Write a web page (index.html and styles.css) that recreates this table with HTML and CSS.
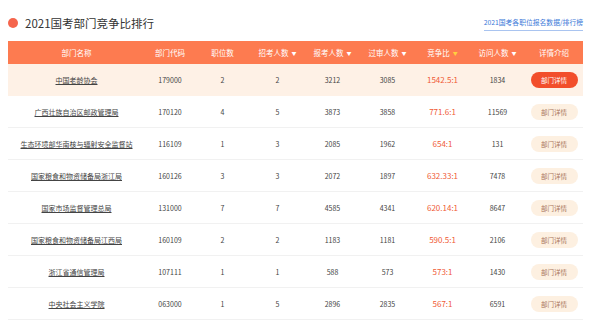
FILE: index.html
```html
<!DOCTYPE html>
<html lang="zh-CN">
<head>
<meta charset="utf-8">
<title>2021国考部门竞争比排行</title>
<link rel="stylesheet" href="styles.css">
</head>
<body>
<div class="page">
  <div class="topbar">
    <div class="title"><span class="dot"></span><span class="title-text">2021国考部门竞争比排行</span></div>
    <a class="toplink" href="#">2021国考各职位报名数据/排行榜</a>
  </div>
  <table class="rank">
    <colgroup>
      <col class="c-name"><col class="c-code"><col class="c-n"><col class="c-n"><col class="c-n"><col class="c-n"><col class="c-n"><col class="c-n"><col class="c-btn">
    </colgroup>
    <thead>
      <tr>
        <th>部门名称</th>
        <th>部门代码</th>
        <th>职位数</th>
        <th>招考人数<span class="arr">▼</span></th>
        <th>报考人数<span class="arr">▼</span></th>
        <th>过审人数<span class="arr">▼</span></th>
        <th>竞争比<span class="arr active">▼</span></th>
        <th>访问人数<span class="arr">▼</span></th>
        <th>详情介绍</th>
      </tr>
    </thead>
    <tbody>
      <tr class="hl">
        <td><a href="#">中国老龄协会</a></td><td>179000</td><td>2</td><td>2</td><td>3212</td><td>3085</td><td class="ratio">1542.5:1</td><td>1834</td><td><span class="btn on">部门详情</span></td>
      </tr>
      <tr>
        <td><a href="#">广西壮族自治区邮政管理局</a></td><td>170120</td><td>4</td><td>5</td><td>3873</td><td>3858</td><td class="ratio">771.6:1</td><td>11569</td><td><span class="btn">部门详情</span></td>
      </tr>
      <tr>
        <td><a href="#">生态环境部华南核与辐射安全监督站</a></td><td>116109</td><td>1</td><td>3</td><td>2085</td><td>1962</td><td class="ratio">654:1</td><td>131</td><td><span class="btn">部门详情</span></td>
      </tr>
      <tr>
        <td><a href="#">国家粮食和物资储备局浙江局</a></td><td>160126</td><td>3</td><td>3</td><td>2072</td><td>1897</td><td class="ratio">632.33:1</td><td>7478</td><td><span class="btn">部门详情</span></td>
      </tr>
      <tr>
        <td><a href="#">国家市场监督管理总局</a></td><td>131000</td><td>7</td><td>7</td><td>4585</td><td>4341</td><td class="ratio">620.14:1</td><td>8647</td><td><span class="btn">部门详情</span></td>
      </tr>
      <tr>
        <td><a href="#">国家粮食和物资储备局江西局</a></td><td>160109</td><td>2</td><td>2</td><td>1183</td><td>1181</td><td class="ratio">590.5:1</td><td>2106</td><td><span class="btn">部门详情</span></td>
      </tr>
      <tr>
        <td><a href="#">浙江省通信管理局</a></td><td>107111</td><td>1</td><td>1</td><td>588</td><td>573</td><td class="ratio">573:1</td><td>1430</td><td><span class="btn">部门详情</span></td>
      </tr>
      <tr>
        <td><a href="#">中央社会主义学院</a></td><td>063000</td><td>1</td><td>5</td><td>2896</td><td>2835</td><td class="ratio">567:1</td><td>6591</td><td><span class="btn">部门详情</span></td>
      </tr>
    </tbody>
  </table>
</div>
</body>
</html>
```

FILE: styles.css
```css
html, body {
  margin: 0;
  padding: 0;
  background: #fff;
}
body {
  font-family: "Noto Sans CJK SC", "Noto Sans", sans-serif;
  color: #333;
}
.page {
  padding: 0 7px 0 8px;
}
.topbar {
  height: 41px;
  display: flex;
  align-items: center;
  justify-content: space-between;
  padding-top: 4px;
  box-sizing: border-box;
}
.title {
  display: flex;
  align-items: center;
}
.dot {
  width: 10px;
  height: 10px;
  border-radius: 50%;
  background: #f5654c;
  margin-right: 7px;
}
.title-text {
  font-size: 11.5px;
  color: #333;
}
.toplink {
  font-size: 6.8px;
  color: #3a78d8;
  text-decoration: none;
  border-bottom: 1px solid #a9c4f0;
  padding-bottom: 3px;
  margin-top: 3px;
}
.rank {
  width: 575px;
  border-collapse: collapse;
  table-layout: fixed;
}
.c-name { width: 137px; }
.c-code { width: 50px; }
.c-n { width: 55px; }
.c-btn { width: 58px; }
.rank th {
  background: #fd7b50;
  color: #fff;
  font-weight: normal;
  font-size: 7.5px;
  height: 23px;
  padding: 0;
  text-align: center;
  white-space: nowrap;
}
.arr {
  font-size: 5px;
  margin-left: 3px;
  vertical-align: 1px;
  color: #fff;
}
.arr.active {
  color: #ffcf3f;
}
.rank td {
  height: 31px;
  padding: 0;
  text-align: center;
  font-size: 7px;
  color: #444;
  border-bottom: 1px solid #f1f1f1;
  white-space: nowrap;
}
.rank tr.hl td {
  background: #fef1e6;
  border-bottom-color: #fef1e6;
}
.rank td a {
  color: #444;
  text-decoration: underline;
}
.rank td.ratio {
  color: #f05a36;
  font-size: 8px;
}
.btn {
  display: inline-block;
  width: 47px;
  height: 16px;
  line-height: 16px;
  border-radius: 8px;
  background: #fdf0e1;
  color: #a9745a;
  font-size: 6.5px;
  vertical-align: middle;
}
.btn.on {
  background: #f24e2b;
  color: #fff;
}
```
